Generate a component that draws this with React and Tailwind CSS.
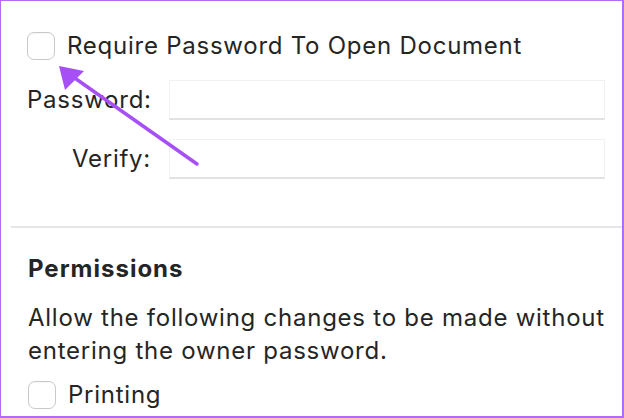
import React from "react";

export default function App() {
  return (
    <div
      className="relative w-[624px] h-[418px] overflow-hidden bg-white border-t border-l border-b-2 border-r-2 border-[#b46af5] text-[#252525]"
      style={{ fontFamily: "Inter, 'Noto Sans', sans-serif" }}
    >
      {/* password section */}
      <div className="pl-[26px] pr-[17px] pt-[31px]">
        <Check label="Require Password To Open Document" />

        <div className="mt-[20px] flex flex-col gap-[19px]">
          <Field label="Password:" />
          <Field label="Verify:" />
        </div>
      </div>

      <div className="ml-[10px] mt-[47px] h-[2px] bg-[#e6e6e6]" />

      {/* permissions */}
      <div className="pl-[27px] pr-[8px] pt-[27px]">
        <h2 className="text-[24px] font-bold leading-[28px] tracking-[1px]">Permissions</h2>
        <p className="mt-[18px] text-[24px] leading-[33px] tracking-[0.75px] whitespace-nowrap">
          Allow the following changes to be made without
          <br />
          entering the owner password.
        </p>
        <div className="mt-[14px]">
          <Check label="Printing" />
        </div>
      </div>

      {/* annotation arrow */}
      <svg
        className="absolute left-0 top-0 pointer-events-none"
        width="624"
        height="418"
        viewBox="0 0 624 418"
      >
        <line x1="196" y1="163" x2="68" y2="73" stroke="#a64ff6" strokeWidth="3.5" strokeLinecap="round" />
        <polygon points="58,65 83,70 64,89" fill="#a64ff6" />
      </svg>
    </div>
  );
}

const Check = ({ label }) => (
  <label className="flex items-center gap-[12px]">
    <span className="w-[28px] h-[28px] rounded-[7px] border border-[#c9c9c9] bg-white shadow-[inset_0_1px_1px_rgba(0,0,0,0.04)]" />
    <span className="text-[24px] leading-[28px] tracking-[0.75px]">{label}</span>
  </label>
);

const Field = ({ label }) => (
  <div className="flex items-center">
    <span className="w-[124px] text-right text-[24px] leading-[28px] tracking-[0.75px]">{label}</span>
    <div className="ml-[18px] flex-1 h-[40px] border border-[#f1f1f1] border-b-2 border-b-[#e2e2e2] bg-white" />
  </div>
);
